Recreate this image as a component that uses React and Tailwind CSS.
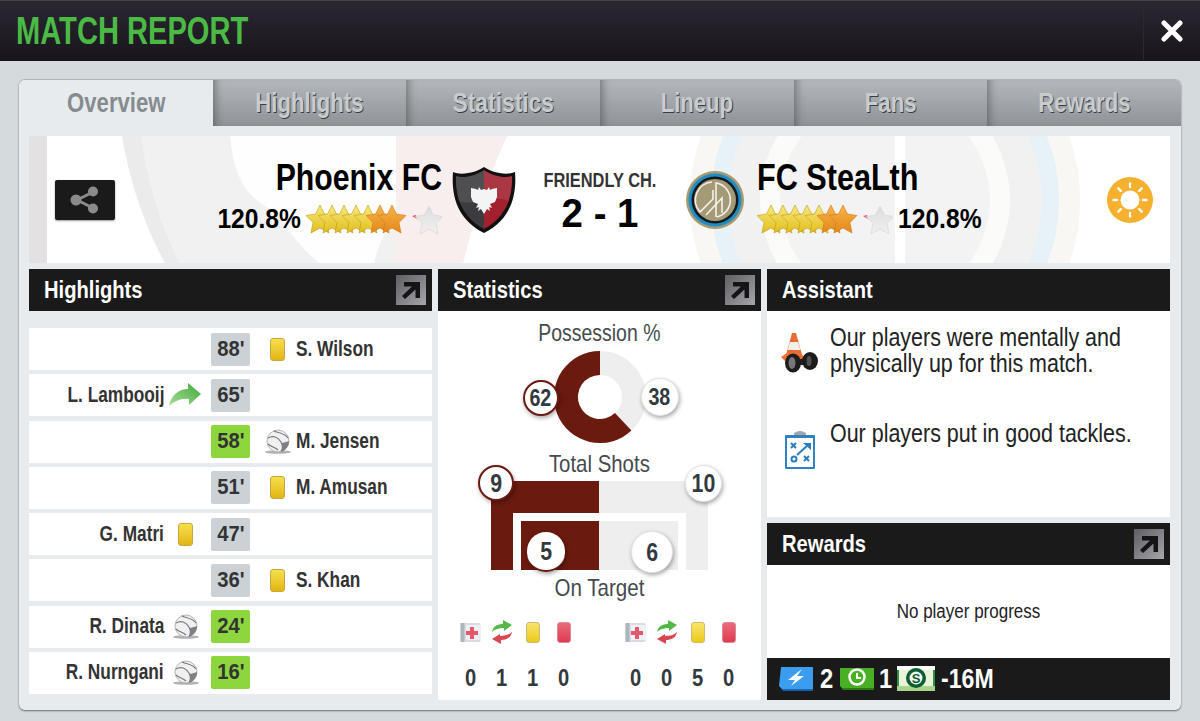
import { useId } from 'react';

const tabs = [
    { label: 'Overview', active: true, squeeze: 'scale-x-[0.79]' },
    { label: 'Highlights', squeeze: 'scale-x-[0.79]' },
    { label: 'Statistics', squeeze: 'scale-x-[0.815]' },
    { label: 'Lineup', squeeze: 'scale-x-[0.79]' },
    { label: 'Fans', squeeze: 'scale-x-[0.79]' },
    { label: 'Rewards', squeeze: 'scale-x-[0.79]' },
];

const events = [
    { min: "88'", side: 'right', name: 'S. Wilson', icon: 'card' },
    { min: "65'", side: 'left', name: 'L. Lambooij', icon: 'arrow' },
    { min: "58'", side: 'right', name: 'M. Jensen', icon: 'ball', goal: true },
    { min: "51'", side: 'right', name: 'M. Amusan', icon: 'card' },
    { min: "47'", side: 'left', name: 'G. Matri', icon: 'card' },
    { min: "36'", side: 'right', name: 'S. Khan', icon: 'card' },
    { min: "24'", side: 'left', name: 'R. Dinata', icon: 'ball', goal: true },
    { min: "16'", side: 'left', name: 'R. Nurngani', icon: 'ball', goal: true },
];

const STAR = '14,0 18.500,9 28,10.500 21,17.500 23,28 14,23 5,28 7,17.500 0,10.500 9.500,9';

// no condensed face is installed, so text is squeezed horizontally around its alignment edge
const Txt = ({ className, children }) => (
    <span className={`inline-block whitespace-nowrap ${className}`}>{children}</span>
);

const Stars = () => {
    const id = useId();
    return (
        <svg width="136" height="32" viewBox="0 0 136 32" className="shrink-0">
            <defs>
                <linearGradient id={`${id}y`} x1="0" y1="0" x2="0" y2="1">
                    <stop offset="0" stopColor="#f9ea7c" />
                    <stop offset="1" stopColor="#e2bd1c" />
                </linearGradient>
                <linearGradient id={`${id}o`} x1="0" y1="0" x2="0" y2="1">
                    <stop offset="0" stopColor="#f7b54a" />
                    <stop offset="1" stopColor="#e58718" />
                </linearGradient>
                <linearGradient id={`${id}g`} x1="0" y1="0" x2="0" y2="1">
                    <stop offset="0" stopColor="#dddddf" />
                    <stop offset="1" stopColor="#f2eff0" />
                </linearGradient>
            </defs>
            {[0, 12, 24, 36, 48, 60, 72].map((x, i) => (
                <polygon key={x} points={STAR} transform={`translate(${x} 2)`} fill={`url(#${id}${i > 4 ? 'o' : 'y'})`} stroke={i > 4 ? '#c9781c' : '#b89a1c'} strokeWidth="0.6" strokeLinejoin="round" />
            ))}
            <path d="M106 13l4 -1 1 4z" fill="#d9576c" />
            <polygon points={STAR} transform="translate(109 3)" fill={`url(#${id}g)`} stroke="#cfcfd2" strokeWidth="0.5" strokeLinejoin="round" />
        </svg>
    );
};

const Shield = () => (
    <svg width="64" height="66" viewBox="0 0 64 66" className="shrink-0">
        <path d="M32 0C25 5 10 9 1 5C-1 30 6 53 32 66C58 53 65 30 63 5C54 9 39 5 32 0Z" fill="#111" />
        <path d="M32 3C25 8 12 12 4 9C3 30 10 50 32 62Z" fill="#3c3c3e" />
        <path d="M32 3C39 8 52 12 60 9C61 30 54 50 32 62Z" fill="#a1212f" />
        <path d="M4 9C12 12 25 8 32 3C39 8 52 12 60 9C60 20 59 28 56 34C40 26 22 40 7 34C5 28 4 20 4 9Z" fill="#fff" opacity=".1" />
        <path d="M27 20l2 3 3-1 3 1 2-3 1 3 2-1 5-1v9l-2 5-5 2 2 4-3-1 1 4-3-2-3 5-3-5-3 2 1-4-3 1 2-4-5-2-2-5v-9l5 1 2 1z" fill="#f4f4f4" />
    </svg>
);

const ClubBadge = () => (
    <svg width="58" height="60" viewBox="0 0 58 60" className="shrink-0">
        <circle cx="29" cy="30" r="29" fill="#a89a6c" />
        <circle cx="29" cy="30" r="26.500" fill="#1b8ec9" />
        <circle cx="29" cy="30" r="23.500" fill="#14181c" />
        <circle cx="29" cy="30" r="21" fill="#a59a78" />
        <g fill="none" stroke="#f4f1e6" strokeWidth="1.600">
            <path d="M26 12A18 18 0 0 0 14 42L27 29V20" />
            <path d="M30 12V47M31 13A17.500 17.500 0 0 1 31 47" />
            <path d="M20 45L36 28V43" />
        </g>
    </svg>
);

const ShareIcon = () => (
    <svg width="30" height="28" viewBox="0 0 30 28">
        <path d="M23 6L7 14L23 22" fill="none" stroke="#8b8b8b" strokeWidth="3" />
        <circle cx="23" cy="5.500" r="5" fill="#8b8b8b" />
        <circle cx="6" cy="14" r="5.500" fill="#8b8b8b" />
        <circle cx="23" cy="22.500" r="5" fill="#8b8b8b" />
    </svg>
);

const CloseIcon = () => (
    <svg width="22" height="22" viewBox="0 0 22 22">
        <path d="M3 3L19 19M19 3L3 19" stroke="#fff" strokeWidth="5" strokeLinecap="round" />
    </svg>
);

const SunIcon = () => (
    <svg width="46" height="46" viewBox="0 0 46 46">
        <circle cx="23" cy="23" r="23" fill="#f5b02f" />
        <circle cx="23" cy="23" r="9.500" fill="#fff" />
        <g stroke="#fff" strokeWidth="2.400" strokeLinecap="round">
            <path d="M23 6.500v3.500M23 36v3.500M6.500 23H10M36 23h3.500M11.300 11.300l2.500 2.500M32.200 32.200l2.500 2.500M34.700 11.300l-2.500 2.500M13.800 32.200l-2.500 2.500" />
        </g>
    </svg>
);

const ArrowButton = () => (
    <div className="w-[30px] h-[30px] flex items-center justify-center bg-gradient-to-br from-[#5f5f63] to-[#a7a7ab]">
        <svg width="22" height="22" viewBox="0 0 22 22">
            <path d="M4 3H20V19H15.500V10.500L5 20L2 17L12 7.500H4Z" fill="#141414" />
        </svg>
    </div>
);

const YellowCard = () => (
    <div className="w-[15px] h-[23px] rounded-[3px] border border-[#c9a63f] bg-gradient-to-b from-[#f6e04a] to-[#e2b50c]" />
);

const Ball = () => (
    <svg width="28" height="26" viewBox="0 0 28 26">
        <ellipse cx="14" cy="23" rx="13" ry="1.800" fill="#555" opacity=".45" />
        <circle cx="14" cy="12" r="11" fill="#f0f0f1" stroke="#a2a4a7" strokeWidth=".8" />
        <path d="M4 9C9 6 14 8 17 13C19 17 19 20 17 22.500M10 2C14 4 21 4 24 9M4 15C7 18 11 18 14 21" fill="none" stroke="#75787c" strokeWidth="1.200" />
        <path d="M18 14C21 13 23 13 25 12C25 17 22 21 18 22.500Z" fill="#7d8084" />
    </svg>
);

const SubArrow = () => (
    <svg width="34" height="24" viewBox="0 0 34 24">
        <defs>
            <linearGradient id="sub-arrow" x1="0" y1="1" x2="1" y2="0">
                <stop offset="0" stopColor="#a8de98" />
                <stop offset="1" stopColor="#3fa83a" />
            </linearGradient>
        </defs>
        <path d="M0 23C2 12 10 6 19 6V0L32 11L20 22V16C12 15 6 18 0 23Z" fill="url(#sub-arrow)" />
    </svg>
);

const MedicalIcon = () => (
    <svg width="21" height="21" viewBox="0 0 21 21">
        <rect x=".5" y="1" width="20" height="19" rx="1.500" fill="#d9dde2" />
        <rect x=".5" y="1" width="4" height="19" fill="#aeb4bc" />
        <rect x="6" y="3" width="14" height="15" fill="#eef0f3" />
        <path d="M10 5h4v4h4v4h-4v4h-4v-4H6V9h4z" fill="#e4586c" />
    </svg>
);

const SwapIcon = () => (
    <svg width="22" height="25" viewBox="0 0 22 25">
        <path d="M1 12C2 6 7 4 12 4V0L21 5L13 11V8C8 8 4 9 1 12Z" fill="#54b848" />
        <path d="M21 12C20 18 15 20 10 20V24L1 19L9 14V16C14 16 18 15 21 12Z" fill="#d9464f" />
    </svg>
);

const StatCard = ({ red }) => (
    <div className={`w-[14px] h-[21px] rounded-[3px] border ${red ? 'border-[#d98a98] bg-gradient-to-b from-[#e96a7a] to-[#de3a50]' : 'border-[#cdb978] bg-gradient-to-b from-[#f8e565] to-[#ecc90f]'}`} />
);

const ConeIcon = () => (
    <svg width="38" height="42" viewBox="0 0 38 42">
        <path d="M11 1h4l6 22H5z" fill="#e86a36" />
        <path d="M9 10h8l2.500 8H6.500z" fill="#f3f0ea" />
        <path d="M0 25L6 21H20L25 28L6 31z" fill="#ee6f33" />
        <rect x="14" y="27" width="16" height="6" fill="#222" />
        <ellipse cx="12" cy="31" rx="8" ry="9.500" fill="#1c1c1c" />
        <ellipse cx="11" cy="31" rx="3.500" ry="6" fill="#77777a" />
        <ellipse cx="29" cy="29" rx="8" ry="9" fill="#1c1c1c" />
        <ellipse cx="28" cy="29" rx="2.500" ry="5" fill="#505053" />
    </svg>
);

const ClipboardIcon = () => (
    <svg width="32" height="40" viewBox="0 0 32 40">
        <path d="M10 3Q16 -1 22 3V5H10z" fill="#a3a7ab" />
        <rect x="1" y="5" width="30" height="34" rx="1" fill="#2f83c4" />
        <rect x="3" y="8" width="26" height="29" fill="#fff" />
        <g stroke="#2b7cbc" strokeWidth="2" fill="none">
            <path d="M7 13l5 5M12 13l-5 5M20 26l5 5M25 26l-5 5" />
            <circle cx="10" cy="29" r="2.500" />
            <path d="M13 25L24 15" />
        </g>
        <path d="M19 13h8v7z" fill="#2b7cbc" />
    </svg>
);

const BoltIcon = () => (
    <svg width="36" height="26" viewBox="0 0 36 26">
        <path d="M3 1H35V23H4L1 20Z" fill="#3b9df0" />
        <path d="M1 20L4 23H35V25H5Z" fill="#1463ad" />
        <path d="M24 3L10 14H17L13 20L26 10H19Z" fill="#fff" />
    </svg>
);

const ClockNote = () => (
    <svg width="36" height="24" viewBox="0 0 36 24">
        <path d="M1 1H35V21H3L1 19Z" fill="#49b025" />
        <path d="M1 19L3 21H35V23H4Z" fill="#2a7a14" />
        <circle cx="18" cy="10" r="7.500" fill="none" stroke="#fff" strokeWidth="2.500" />
        <path d="M18 6v5h4" fill="none" stroke="#fff" strokeWidth="2" />
    </svg>
);

const MoneyIcon = () => (
    <svg width="38" height="26" viewBox="0 0 38 26">
        <rect y="0" width="38" height="25" fill="#2f8f46" />
        <rect x="2" y="3" width="34" height="19" fill="#e9f3d8" />
        <rect y="0" width="38" height="4" fill="#fff" />
        <rect y="20" width="38" height="5" fill="#a9d58c" />
        <circle cx="19" cy="12" r="10" fill="#0c5d33" />
        <circle cx="19" cy="12" r="6.500" fill="#f2f7ee" />
        <text x="19" y="16.500" textAnchor="middle" fontSize="13" fontWeight="700" fill="#0c5d33">S</text>
    </svg>
);

const Bubble = ({ value, red, className }) => (
    <div className={`absolute flex items-center justify-center rounded-full bg-white font-bold text-[#333a3f] shadow-[1px_2px_4px_rgba(0,0,0,0.35)] ${red ? 'border-2 border-[#6b1a10]' : 'border border-[#e4e4e4]'} ${className}`}>
        <span className="inline-block scale-x-[0.82]">{value}</span>
    </div>
);

const SectionHeader = ({ title, arrow }) => (
    <div className="h-[42px] bg-[#1a1a1a] flex items-center justify-between pl-[15px] pr-[6px] shrink-0">
        <Txt className="text-white font-bold text-[24px] origin-left scale-x-[0.84]">{title}</Txt>
        {arrow && <ArrowButton />}
    </div>
);

const EventIcon = ({ icon }) => {
    if (icon === 'card') return <YellowCard />;
    if (icon === 'ball') return <Ball />;
    return <SubArrow />;
};

const EventRow = ({ ev }) => (
    <div className="h-[42px] bg-white grid grid-cols-[182px_39px_1fr] items-center">
        <div className="flex items-center justify-end">
            {ev.side === 'left' && (
                <>
                    <Txt className="font-bold text-[22px] text-[#333] origin-right scale-x-[0.785] -translate-y-px">{ev.name}</Txt>
                    <span className="w-[47px] pr-[4px] flex justify-center shrink-0"><EventIcon icon={ev.icon} /></span>
                </>
            )}
        </div>
        <div className={`h-[33px] rounded-[2px] flex items-center justify-center font-bold text-[22px] text-[#333] ${ev.goal ? 'bg-[#8ed63e]' : 'bg-[#ccd1d5]'}`}>
            <Txt className="scale-x-[0.92] -translate-y-px">{ev.min}</Txt>
        </div>
        <div className="flex items-center pl-[10px]">
            {ev.side === 'right' && (
                <>
                    <span className="w-[35px] flex justify-center"><EventIcon icon={ev.icon} /></span>
                    <Txt className="ml-[1px] font-bold text-[22px] text-[#333] origin-left scale-x-[0.785] -translate-y-px">{ev.name}</Txt>
                </>
            )}
        </div>
    </div>
);

const BannerBackground = () => (
    <svg className="absolute inset-0" width="1141" height="127" viewBox="0 0 1141 127">
        <rect width="18" height="127" fill="#e3e1e1" />
        <path d="M93 0Q105 70 136 127H434Q450 60 478 0Z" fill="#f1f1f1" />
        <path d="M93 0Q105 70 136 127H150Q122 70 112 0Z" fill="#ebebeb" />
        <path d="M367 0H478Q450 60 434 127H367Z" fill="#f9eeee" />
        <path d="M201 0C205 40 215 60 245 75C260 95 270 110 290 127H345C350 105 360 90 367 75V0Z" fill="#fff" opacity=".9" />
        <circle cx="856" cy="64" r="195" fill="#f8f7f3" />
        <circle cx="856" cy="64" r="174" fill="#e6f1f8" />
        <circle cx="856" cy="64" r="157" fill="#f1f1f1" />
        <circle cx="856" cy="64" r="125" fill="#fbfbfa" />
        <circle cx="856" cy="64" r="105" fill="#f3f3f3" />
        <rect x="866" y="0" width="10" height="127" fill="#fff" />
    </svg>
);

const Banner = () => (
    <div className="relative h-[127px] bg-white overflow-hidden shrink-0">
        <BannerBackground />
        <div className="relative h-full grid grid-cols-[423px_64px_168px_60px_1fr] items-center">
            <div className="flex items-center h-full">
                <div className="ml-[26px] w-[60px] h-[40px] rounded-[2px] bg-[#1a1a1a] flex items-center justify-center shadow-[0_1px_2px_rgba(0,0,0,0.4)]">
                    <ShareIcon />
                </div>
                <div className="ml-auto mr-[10px] pb-[5px] flex flex-col items-end">
                    <Txt className="font-bold text-[36px] leading-[40px] text-black origin-right scale-x-[0.84]">Phoenix FC</Txt>
                    <div className="flex items-center mt-[4px]">
                        <Txt className="font-bold text-[28px] leading-[34px] text-black origin-right scale-x-[0.88]">120.8%</Txt>
                        <span className="ml-[5px] flex"><Stars /></span>
                    </div>
                </div>
            </div>
            <div className="flex justify-center"><Shield /></div>
            <div className="flex flex-col items-center pt-[3px]">
                <Txt className="font-bold text-[20px] leading-[24px] text-[#333] scale-x-[0.82]">FRIENDLY CH.</Txt>
                <Txt className="font-bold text-[40px] leading-[42px] text-black scale-x-[0.96]">2 - 1</Txt>
            </div>
            <div className="flex justify-end"><ClubBadge /></div>
            <div className="pl-[13px] pb-[5px] flex flex-col items-start">
                <Txt className="font-bold text-[36px] leading-[40px] text-black origin-left scale-x-[0.85]">FC SteaLth</Txt>
                <div className="flex items-center mt-[4px]">
                    <Stars />
                    <Txt className="ml-[5px] font-bold text-[28px] leading-[34px] text-black origin-left scale-x-[0.88]">120.8%</Txt>
                </div>
            </div>
        </div>
        <div className="absolute right-[17px] top-[41px]"><SunIcon /></div>
    </div>
);

const Highlights = () => (
    <div className="flex flex-col">
        <SectionHeader title="Highlights" arrow />
        <div className="flex flex-col gap-[4.28px] pt-[17px]">
            {events.map((ev) => <EventRow key={ev.min} ev={ev} />)}
        </div>
    </div>
);

const StatIconRow = () => (
    <div className="grid grid-cols-4 w-[124px] justify-items-center items-center">
        <MedicalIcon />
        <SwapIcon />
        <StatCard />
        <StatCard red />
    </div>
);

const NumberRow = ({ values }) => (
    <div className="grid grid-cols-4 w-[124px] justify-items-center font-bold text-[24px] leading-[28px] text-[#333a3f]">
        {values.map((v, i) => <Txt key={i} className="scale-x-[0.84]">{v}</Txt>)}
    </div>
);

const Statistics = () => (
    <div className="flex flex-col bg-white">
        <SectionHeader title="Statistics" arrow />
        <div className="flex flex-col items-center pt-[9px] relative">
            <Txt className="text-[24px] leading-[26px] text-[#444a4e] scale-x-[0.81]">Possession %</Txt>
            <div className="relative mt-[5px] w-[92px] h-[92px]">
                <svg width="92" height="92" viewBox="0 0 92 92">
                    <circle cx="46" cy="46" r="34" fill="none" stroke="#eeeeee" strokeWidth="24" />
                    <path d="M46 0A46 46 0 1 0 77.400 79.600L61 62A22 22 0 1 1 46 24Z" fill="#6b1a10" />
                </svg>
                <Bubble value="62" red className="left-[-31px] top-[29px] w-[36px] h-[36px] text-[24px]" />
                <Bubble value="38" className="left-[87px] top-[27px] w-[38px] h-[38px] text-[24px]" />
            </div>
            <Txt className="mt-[8px] text-[24px] leading-[26px] text-[#444a4e] scale-x-[0.85]">Total Shots</Txt>
            <div className="relative mt-[4px] w-[217px] h-[89px] pt-[32px] flex justify-center bg-[linear-gradient(90deg,#6b1a10_50%,#eeeeee_50%)]">
                <div className="w-[173px] h-[57px] bg-white px-[8px] pt-[8px]">
                    <div className="h-[49px] bg-[linear-gradient(90deg,#6b1a10_50%,#eeeeee_50%)]" />
                </div>
                <Bubble value="9" red className="left-[-13px] top-[-16px] w-[36px] h-[36px] text-[26px]" />
                <Bubble value="10" className="left-[194px] top-[-16px] w-[37px] h-[37px] text-[26px]" />
                <Bubble value="5" red className="left-[36px] top-[51px] w-[38px] h-[40px] text-[26px] border-t-0 border-x-0" />
                <Bubble value="6" className="left-[140px] top-[50px] w-[42px] h-[42px] text-[26px]" />
            </div>
            <Txt className="mt-[5px] text-[24px] leading-[26px] text-[#444a4e] scale-x-[0.855]">On Target</Txt>
            <div className="w-full flex justify-between px-[17px] mt-[19px]">
                <StatIconRow />
                <StatIconRow />
            </div>
            <div className="w-full flex justify-between px-[17px] mt-[19px]">
                <NumberRow values={[0, 1, 1, 0]} />
                <NumberRow values={[0, 0, 5, 0]} />
            </div>
        </div>
    </div>
);

const AssistantNote = ({ icon, lines, iconOffset, className }) => (
    <div className={`grid grid-cols-[63px_1fr] ${className}`}>
        <div className={`flex justify-center pl-[2px] ${iconOffset}`}>{icon}</div>
        <Txt className="text-[25px] leading-[26px] text-[#222] origin-left scale-x-[0.858]">{lines}</Txt>
    </div>
);

const RightColumn = () => (
    <div className="flex flex-col">
        <SectionHeader title="Assistant" />
        <div className="h-[206px] bg-white pt-[13px] shrink-0">
            <AssistantNote icon={<ConeIcon />} iconOffset="pt-[8px]" lines={<>Our players were mentally and<br />physically up for this match.</>} />
            <AssistantNote icon={<ClipboardIcon />} iconOffset="pt-[10px]" lines="Our players put in good tackles." className="mt-[44px]" />
        </div>
        <div className="h-[6px] shrink-0" />
        <SectionHeader title="Rewards" arrow />
        <div className="h-[93px] bg-white flex items-center justify-center shrink-0">
            <Txt className="text-[20px] text-[#222] scale-x-[0.85] -translate-y-px">No player progress</Txt>
        </div>
        <div className="h-[42px] bg-[#1a1a1a] flex items-center pl-[11px] text-white font-bold text-[28px] shrink-0">
            <BoltIcon />
            <Txt className="ml-[6px] w-[13px] origin-left scale-x-[0.85]">2</Txt>
            <span className="ml-[6px] flex"><ClockNote /></span>
            <Txt className="ml-[4px] w-[10px] origin-left scale-x-[0.85]">1</Txt>
            <span className="ml-[8px] flex"><MoneyIcon /></span>
            <Txt className="ml-[6px] origin-left scale-x-[0.825]">-16M</Txt>
        </div>
    </div>
);

const App = () => (
    <div className="w-[1200px] h-[721px] overflow-hidden bg-[#d5dadd] flex flex-col font-['Liberation_Sans',sans-serif]">
        <header className="h-[61px] shrink-0 flex items-center justify-between border-t border-[#444] border-b-[1px] border-b-[#16131a] bg-gradient-to-b from-[#2c2832] to-[#18151c]">
            <h1 className="ml-[16px] mt-[2px] font-bold text-[38px] text-[#4bba45] whitespace-nowrap origin-left scale-x-[0.766]">MATCH REPORT</h1>
            <div className="w-[57px] h-full border-l border-[#2b2830] flex items-center justify-center">
                <CloseIcon />
            </div>
        </header>
        <div className="px-[19px] pt-[19px]">
            <div className="h-[630px] rounded-[6px] bg-[#e8ebed] shadow-[0_1px_2px_rgba(0,0,0,0.5),0_-1px_1px_rgba(0,0,0,0.15)] overflow-hidden">
                <div className="h-[46px] grid grid-cols-6">
                    {tabs.map((t) => (
                        <div
                            key={t.label}
                            className={t.active
                                ? 'flex items-center justify-center font-bold text-[28px] text-[#868b8f] bg-[#e8ebed]'
                                : 'flex items-center justify-center font-bold text-[28px] text-[#c9ccce] [text-shadow:1px_1px_0_#3a3d40] bg-gradient-to-b from-[#b4b7bb] to-[#8f9397] shadow-[inset_8px_0_8px_-6px_rgba(60,60,60,0.55)]'}
                        >
                            <Txt className={t.squeeze}>{t.label}</Txt>
                        </div>
                    ))}
                </div>
                <div className="pl-[10px] pr-[11px] pt-[10px]">
                    <Banner />
                    <div className="mt-[6px] h-[431px] grid grid-cols-[403px_323px_403px] gap-[6px]">
                        <Highlights />
                        <Statistics />
                        <RightColumn />
                    </div>
                </div>
            </div>
        </div>
    </div>
);

export default App;
